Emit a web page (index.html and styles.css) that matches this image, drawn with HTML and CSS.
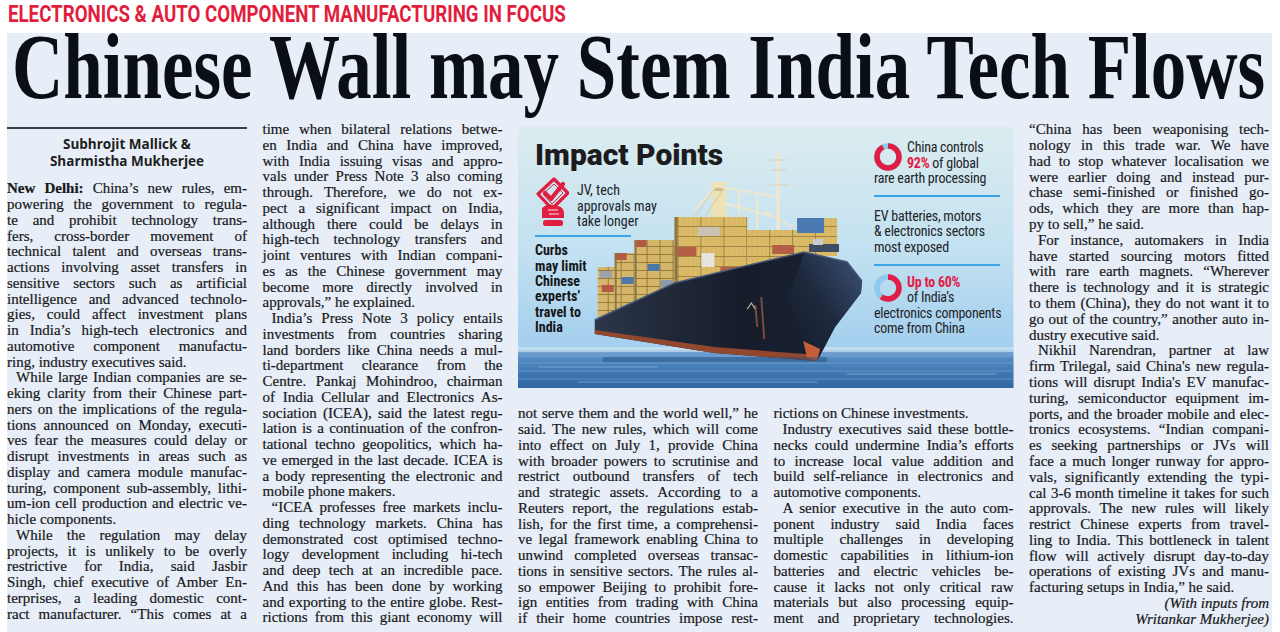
FILE: index.html
```html
<!DOCTYPE html>
<html lang="en">
<head>
<meta charset="utf-8">
<title>Chinese Wall may Stem India Tech Flows</title>
<link rel="stylesheet" href="styles.css">
</head>
<body>
<div class="kicker">ELECTRONICS &amp; AUTO COMPONENT MANUFACTURING IN FOCUS</div>
<div class="panel">
  <h1 class="headline">Chinese Wall may Stem India Tech Flows</h1>
  <div class="grid">
    <div class="col c1">
      <div class="rule"></div>
      <div class="byline">Subhrojit Mallick &amp;<br>Sharmistha Mukherjee</div>
      <div class="txt">
        <p><span class="ln"><b>New Delhi:</b> China’s new rules, em-</span><span class="ln">powering the government to regula-</span><span class="ln">te and prohibit technology trans-</span><span class="ln">fers, cross-border movement of</span><span class="ln">technical talent and overseas trans-</span><span class="ln">actions involving asset transfers in</span><span class="ln">sensitive sectors such as artificial</span><span class="ln">intelligence and advanced technolo-</span><span class="ln">gies, could affect investment plans</span><span class="ln">in India’s high-tech electronics and</span><span class="ln">automotive component manufactu-</span><span class="ln e">ring, industry executives said.</span></p>
        <p><span class="ln i">While large Indian companies are se-</span><span class="ln">eking clarity from their Chinese part-</span><span class="ln">ners on the implications of the regula-</span><span class="ln">tions announced on Monday, executi-</span><span class="ln">ves fear the measures could delay or</span><span class="ln">disrupt investments in areas such as</span><span class="ln">display and camera module manufac-</span><span class="ln">turing, component sub-assembly, lithi-</span><span class="ln">um-ion cell production and electric ve-</span><span class="ln e">hicle components.</span></p>
        <p><span class="ln i">While the regulation may delay</span><span class="ln">projects, it is unlikely to be overly</span><span class="ln">restrictive for India, said Jasbir</span><span class="ln">Singh, chief executive of Amber En-</span><span class="ln">terprises, a leading domestic cont-</span><span class="ln">ract manufacturer. “This comes at a</span></p>
      </div>
    </div>
    <div class="col c2">
      <div class="txt">
        <p><span class="ln">time when bilateral relations betwe-</span><span class="ln">en India and China have improved,</span><span class="ln">with India issuing visas and appro-</span><span class="ln">vals under Press Note 3 also coming</span><span class="ln">through. Therefore, we do not ex-</span><span class="ln">pect a significant impact on India,</span><span class="ln">although there could be delays in</span><span class="ln">high-tech technology transfers and</span><span class="ln">joint ventures with Indian compani-</span><span class="ln">es as the Chinese government may</span><span class="ln">become more directly involved in</span><span class="ln e">approvals,” he explained.</span></p>
        <p><span class="ln i">India’s Press Note 3 policy entails</span><span class="ln">investments from countries sharing</span><span class="ln">land borders like China needs a mul-</span><span class="ln">ti-department clearance from the</span><span class="ln">Centre. Pankaj Mohindroo, chairman</span><span class="ln">of India Cellular and Electronics As-</span><span class="ln">sociation (ICEA), said the latest regu-</span><span class="ln">lation is a continuation of the confron-</span><span class="ln">tational techno geopolitics, which ha-</span><span class="ln">ve emerged in the last decade. ICEA is</span><span class="ln">a body representing the electronic and</span><span class="ln e">mobile phone makers.</span></p>
        <p><span class="ln i">“ICEA professes free markets inclu-</span><span class="ln">ding technology markets. China has</span><span class="ln">demonstrated cost optimised techno-</span><span class="ln">logy development including hi-tech</span><span class="ln">and deep tech at an incredible pace.</span><span class="ln">And this has been done by working</span><span class="ln">and exporting to the entire globe. Rest-</span><span class="ln">rictions from this giant economy will</span></p>
      </div>
    </div>
    <div class="info">
      <svg class="bg" viewBox="0 0 497 261" preserveAspectRatio="none" aria-hidden="true">
        <defs>
          <linearGradient id="sky" x1="0" y1="0" x2="0" y2="1">
            <stop offset="0" stop-color="#dbecef"/>
            <stop offset="0.55" stop-color="#c3e1f1"/>
            <stop offset="1" stop-color="#a2ceee"/>
          </linearGradient>
          <linearGradient id="sea" x1="0" y1="0" x2="0" y2="1">
            <stop offset="0" stop-color="#7eabd6"/>
            <stop offset="0.25" stop-color="#4f88c0"/>
            <stop offset="1" stop-color="#2f66a3"/>
          </linearGradient>
          <pattern id="cy" width="23" height="10" patternUnits="userSpaceOnUse">
            <rect width="23" height="10" fill="#dbbb68"/>
            <path d="M0 9.5H23M22.5 0V10" stroke="#9c8240" stroke-width="1"/>
            <path d="M5 0V10M10 0V10M15 0V10M19 0V10" stroke="#c8a957" stroke-width="0.6"/>
          </pattern>
          <pattern id="cs" width="13" height="8" patternUnits="userSpaceOnUse">
            <rect width="13" height="8" fill="#d6b66a"/>
            <path d="M0 7.5H13M12.5 0V8" stroke="#957b3c" stroke-width="1"/>
          </pattern>
          <linearGradient id="hull" x1="0" y1="0" x2="1" y2="0">
            <stop offset="0" stop-color="#2b3649"/>
            <stop offset="0.55" stop-color="#161c2a"/>
            <stop offset="1" stop-color="#1b2436"/>
          </linearGradient>
          <linearGradient id="bow" x1="1" y1="0" x2="0" y2="1">
            <stop offset="0" stop-color="#3d5377"/>
            <stop offset="0.5" stop-color="#1f2a3f"/>
            <stop offset="1" stop-color="#131926"/>
          </linearGradient>
        </defs>
        <rect width="497" height="224" fill="url(#sky)"/>
        <rect y="223" width="497" height="38" fill="url(#sea)"/>
        <rect y="220" width="497" height="5" fill="#d3e8f5" opacity="0.6"/>
        <path d="M0 229H497M0 236H497M0 244H497M0 252H497" stroke="#9cc3e6" stroke-width="0.8" opacity="0.45"/>
        <path d="M20 240H140M330 247H480M60 255H300" stroke="#c5ddf2" stroke-width="0.8" opacity="0.5"/>
        <rect x="259" y="25" width="4" height="102" fill="#ece6d6"/>
        <path d="M253 33H270M254 43H269M252 58H271" stroke="#ddd6c4" stroke-width="1.5"/>
        <rect x="194" y="55" width="15" height="40" fill="#ece2b6"/>
        <rect x="197" y="60" width="9" height="4" fill="#c9bd8c"/>
        <path d="M197 59L262 70M206 76L262 91M178 82L198 60M222 64V103M240 68V103M248 84L275 100" stroke="#efe7cb" stroke-width="2" fill="none"/>
        <path d="M198 60L170 100M206 62L186 92" stroke="#d8cfae" stroke-width="1.2"/>
        <rect x="80" y="140" width="17" height="60" fill="url(#cs)"/>
        <rect x="97" y="126" width="20" height="64" fill="url(#cs)"/>
        <rect x="117" y="113" width="40" height="62" fill="url(#cs)"/>
        <rect x="157" y="90" width="73" height="72" fill="url(#cy)"/>
        <rect x="230" y="103" width="50" height="42" fill="url(#cy)"/>
        <rect x="280" y="91" width="40" height="38" fill="url(#cy)"/>
        <rect x="280" y="91" width="27" height="15" fill="#4a79b2"/>
        <rect x="157" y="120" width="22" height="9" fill="#b45e47"/>
        <rect x="203" y="140" width="22" height="9" fill="#b45e47"/>
        <rect x="180" y="100" width="22" height="9" fill="#c9c3b4"/>
        <rect x="184" y="126" width="13" height="14" fill="#e6e4de"/>
        <rect x="117" y="113" width="12" height="7" fill="#b35a44"/>
        <rect x="130" y="137" width="12" height="7" fill="#4d77a8"/>
        <rect x="104" y="150" width="12" height="7" fill="#4d77a8"/>
        <rect x="84" y="158" width="12" height="7" fill="#b35a44"/>
        <rect x="97" y="126" width="12" height="7" fill="#b35a44"/>
        <rect x="143" y="153" width="12" height="7" fill="#8d9aa8"/>
        <rect x="82" y="144" width="12" height="7" fill="#9aa3ad"/>
        <rect x="255" y="118" width="22" height="9" fill="#b45e47"/>
        <rect x="157" y="90" width="3" height="72" fill="#8b7744"/>
        <rect x="117" y="113" width="2" height="62" fill="#8b7744"/>
        <rect x="97" y="126" width="2" height="64" fill="#8b7744"/>
        <polygon points="77,193 157,156 287,125 330,135 345,154 344,166 318,200 300,234 197,226 77,207" fill="url(#hull)"/>
        <polygon points="287,125 330,135 345,154 344,166 318,200 300,234 286,226 272,170" fill="url(#bow)"/>
        <polyline points="77,193 157,156 287,125 330,135 345,154" fill="none" stroke="#45577a" stroke-width="1.5"/>
        <polygon points="77,203 197,220 300,228 300,234 197,226 77,207" fill="#93472f"/>
        <polygon points="286,214 303,222 300,234 290,231" fill="#c45d3a"/>
        <path d="M244 170L247 212M238 178L240 200" stroke="#7a4c3a" stroke-width="2"/>
        <path d="M230 182l4-6 4 6" stroke="#c9b9a0" stroke-width="1.2" fill="none"/>
        <rect x="292" y="117" width="30" height="8" fill="#3d4b63"/>
        <rect x="296" y="112" width="10" height="6" fill="#c8ccd2"/>
        <rect x="85" y="230" width="225" height="5" fill="#234d7c" opacity="0.45"/>
      </svg>
      <div class="ileft">
        <div class="ititle">Impact Points</div>
        <div class="irow">
          <svg class="icon" viewBox="0 0 34 50" width="34" height="50" aria-hidden="true">
            <polygon points="19,2 33,16 17,32 3,17" fill="none" stroke="#e01e40" stroke-width="3.2" stroke-linejoin="round"/>
            <polygon points="19,7 28,16 17,27 8,17" fill="none" stroke="#e01e40" stroke-width="1"/>
            <path d="M10 16L16 22L28 7" fill="none" stroke="#e01e40" stroke-width="4.2" stroke-linecap="round" stroke-linejoin="round"/>
            <path d="M7 31L13 27L23 29C27 30 29 33 29 36V41H7Z" fill="#e01e40"/>
            <path d="M13 33H23M14 37H24" stroke="#fff" stroke-width="0.9"/>
            <rect x="8" y="43" width="20" height="6" rx="2.5" fill="#e01e40"/>
          </svg>
          <div class="itxt jv">JV, tech<br>approvals may<br>take longer</div>
        </div>
        <div class="irule short"></div>
        <div class="itxt bold">Curbs<br>may limit<br>Chinese<br>experts’<br>travel to<br>India</div>
      </div>
      <div class="iright">
        <div class="itxt">
          <svg class="pie p1" viewBox="0 0 28 28" width="28" height="28" aria-hidden="true">
            <circle cx="14" cy="14" r="11" fill="none" stroke="#8ccbee" stroke-width="5.5"/>
            <circle cx="14" cy="14" r="11" fill="none" stroke="#e01e45" stroke-width="5.5" stroke-dasharray="63.6 69.1" transform="rotate(-90 14 14)"/>
          </svg>China controls<br><b class="red">92%</b> of global<br>rare earth processing
        </div>
        <div class="irule r1"></div>
        <div class="itxt ev">EV batteries, motors<br>&amp; electronics sectors<br>most exposed</div>
        <div class="irule r2"></div>
        <div class="itxt up">
          <svg class="pie p2" viewBox="0 0 28 28" width="28" height="28" aria-hidden="true">
            <circle cx="14" cy="14" r="11" fill="none" stroke="#8ccbee" stroke-width="5.5"/>
            <circle cx="14" cy="14" r="11" fill="none" stroke="#e01e45" stroke-width="5.5" stroke-dasharray="41.5 69.1" transform="rotate(-90 14 14)"/>
          </svg><b class="red">Up to 60%</b><br>of India’s<br>electronics components<br>come from China
        </div>
      </div>
    </div>
    <div class="col c3">
      <div class="txt">
        <p><span class="ln">not serve them and the world well,” he</span><span class="ln">said. The new rules, which will come</span><span class="ln">into effect on July 1, provide China</span><span class="ln">with broader powers to scrutinise and</span><span class="ln">restrict outbound transfers of tech</span><span class="ln">and strategic assets. According to a</span><span class="ln">Reuters report, the regulations estab-</span><span class="ln">lish, for the first time, a comprehensi-</span><span class="ln">ve legal framework enabling China to</span><span class="ln">unwind completed overseas transac-</span><span class="ln">tions in sensitive sectors. The rules al-</span><span class="ln">so empower Beijing to prohibit fore-</span><span class="ln">ign entities from trading with China</span><span class="ln">if their home countries impose rest-</span></p>
      </div>
    </div>
    <div class="col c4">
      <div class="txt">
        <p><span class="ln e">rictions on Chinese investments.</span></p>
        <p><span class="ln i">Industry executives said these bottle-</span><span class="ln">necks could undermine India’s efforts</span><span class="ln">to increase local value addition and</span><span class="ln">build self-reliance in electronics and</span><span class="ln e">automotive components.</span></p>
        <p><span class="ln i">A senior executive in the auto com-</span><span class="ln">ponent industry said India faces</span><span class="ln">multiple challenges in developing</span><span class="ln">domestic capabilities in lithium-ion</span><span class="ln">batteries and electric vehicles be-</span><span class="ln">cause it lacks not only critical raw</span><span class="ln">materials but also processing equip-</span><span class="ln">ment and proprietary technologies.</span></p>
      </div>
    </div>
    <div class="col c5">
      <div class="txt">
        <p><span class="ln">“China has been weaponising tech-</span><span class="ln">nology in this trade war. We have</span><span class="ln">had to stop whatever localisation we</span><span class="ln">were earlier doing and instead pur-</span><span class="ln">chase semi-finished or finished go-</span><span class="ln">ods, which they are more than hap-</span><span class="ln e">py to sell,” he said.</span></p>
        <p><span class="ln i">For instance, automakers in India</span><span class="ln">have started sourcing motors fitted</span><span class="ln">with rare earth magnets. “Wherever</span><span class="ln">there is technology and it is strategic</span><span class="ln">to them (China), they do not want it to</span><span class="ln">go out of the country,” another auto in-</span><span class="ln e">dustry executive said.</span></p>
        <p><span class="ln i">Nikhil Narendran, partner at law</span><span class="ln">firm Trilegal, said China's new regula-</span><span class="ln">tions will disrupt India's EV manufac-</span><span class="ln">turing, semiconductor equipment im-</span><span class="ln">ports, and the broader mobile and elec-</span><span class="ln">tronics ecosystems. “Indian compani-</span><span class="ln">es seeking partnerships or JVs will</span><span class="ln">face a much longer runway for appro-</span><span class="ln">vals, significantly extending the typi-</span><span class="ln">cal 3-6 month timeline it takes for such</span><span class="ln">approvals. The new rules will likely</span><span class="ln">restrict Chinese experts from travel-</span><span class="ln">ling to India. This bottleneck in talent</span><span class="ln">flow will actively disrupt day-to-day</span><span class="ln">operations of existing JVs and manu-</span><span class="ln e">facturing setups in India,” he said.</span></p>
        <p class="credit"><span class="ln r">(With inputs from</span><span class="ln r">Writankar Mukherjee)</span></p>
      </div>
    </div>
  </div>
</div>
</body>
</html>
```
FILE: styles.css
```css
html, body {
  margin: 0;
  padding: 0;
  height: 632px;
  overflow: hidden;
  background: #ffffff;
}

.kicker {
  padding-left: 8px;
  font: 700 18.7px/22.1px Roboto, "Liberation Sans", sans-serif;
  color: #e21e3c;
  white-space: nowrap;
  transform: scaleY(1.278);
  transform-origin: left top;
}

.panel {
  margin: 10.9px 0 0 7px;
  width: 1265px;
  height: 599px;
  background: #e7eef7;
}

.headline {
  margin: 0;
  padding-left: 5px;
  font: 700 71px/52.3px "Liberation Serif", serif;
  color: #0a0e15;
  white-space: nowrap;
  transform: scaleY(1.297);
  transform-origin: left top;
}

.grid {
  display: grid;
  grid-template-columns: repeat(5, 240px);
  grid-template-rows: auto 1fr;
  column-gap: 15.5px;
  margin-top: 36.9px;
}

.c1 { grid-column: 1; grid-row: 1 / 3; }
.c2 { grid-column: 2; grid-row: 1 / 3; }
.info { grid-column: 3 / 5; grid-row: 1; }
.c3 { grid-column: 3; grid-row: 2; }
.c4 { grid-column: 4; grid-row: 2; }
.c5 { grid-column: 5; grid-row: 1 / 3; }

.rule {
  height: 2px;
  margin-top: 5px;
  background: #3a3d42;
}

.byline {
  margin-top: 6.5px;
  text-align: center;
  font: 700 13.5px/17px "Open Sans", Roboto, sans-serif;
  color: #1e1e1e;
}

.c1 .txt { margin-top: 11.6px; }

.txt {
  font: 400 15px/15.75px "Liberation Serif", serif;
  color: #18181a;
  -webkit-text-stroke: 0.2px #18181a;
}

.c5 .txt { line-height: 15.8px; }

.txt p { margin: 0; }

.ln {
  display: block;
  white-space: nowrap;
  text-align: justify;
  text-align-last: justify;
}

.ln.e { text-align-last: left; }
.ln.i { text-indent: 9px; }
.ln.r { text-align: right; text-align-last: right; font-style: italic; }

/* infographic */
.info {
  position: relative;
  height: 261px;
  margin: 5px 0 18.2px;
  display: flex;
  justify-content: space-between;
  overflow: hidden;
}

.info .bg {
  position: absolute;
  left: 0;
  top: 0;
  width: 100%;
  height: 100%;
}

.ileft, .iright { position: relative; }

.ileft { padding: 13.1px 0 0 17px; }

.ititle {
  font: 900 30px/30px Roboto, "Liberation Sans", sans-serif;
  color: #1c1c1e;
  white-space: nowrap;
}

.irow {
  display: flex;
  align-items: flex-start;
  margin-top: 6.9px;
}

.icon { display: block; flex: none; }

.itxt {
  font: 400 14px/15.5px "Liberation Sans Narrow", "Roboto Condensed", Roboto, sans-serif;
  color: #222428;
  white-space: nowrap;
}

.itxt.jv { margin: 6px 0 0 8px; }

.itxt.bold {
  font-weight: 700;
  line-height: 15.4px;
  color: #151618;
  margin-top: 6.2px;
}

.irule {
  height: 2px;
  background: #3ba4e3;
}

.irule.short { width: 96px; margin-top: 5.4px; }

.iright {
  width: 126px;
  padding: 13.3px 13.5px 0 0;
}

.iright .itxt { letter-spacing: -0.25px; }

.pie { float: left; margin-right: 5px; }
.p1 { margin-top: 2.7px; }
.p2 { margin-top: -1px; }

.red { color: #e01e45; font-weight: 700; }

.irule.r1 { margin-top: 8.2px; }
.itxt.ev { margin-top: 11.5px; }
.irule.r2 { margin-top: 9.2px; }
.itxt.up { margin-top: 8.5px; }
```
